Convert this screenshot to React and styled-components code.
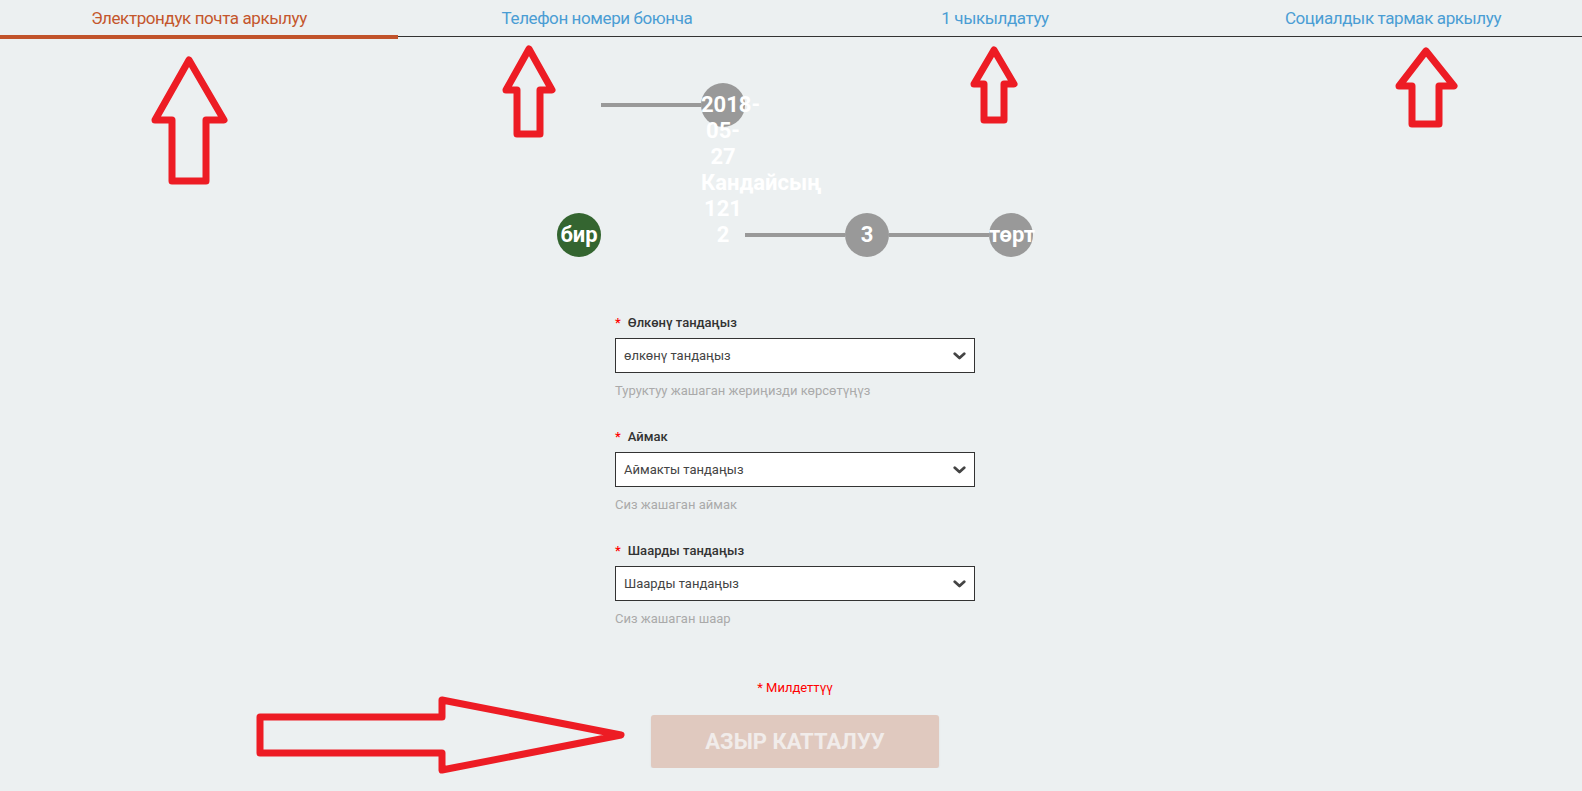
import React from 'react'
import styled, { createGlobalStyle } from 'styled-components'

const GlobalStyle = createGlobalStyle`
  html {
    overflow-x: hidden;
  }
  body {
    margin: 0;
    background: #ecf0f1;
    font-family: Roboto, 'Noto Sans', sans-serif;
  }
`

const TabBar = styled.nav`
  display: flex;
  align-items: flex-start;
`

const Tab = styled.a`
  flex: 0 0 398px;
  display: flex;
  align-items: center;
  justify-content: center;
  height: ${(p) => (p.$active ? '35px' : '36px')};
  margin-bottom: ${(p) => (p.$active ? '-3px' : '0')};
  border-bottom: ${(p) => (p.$active ? '4px solid #c1532b' : '1px solid #333')};
  color: ${(p) => (p.$active ? '#c4562c' : '#4a9dd4')};
  font-size: 17px;
  letter-spacing: -0.4px;
  text-decoration: none;
  cursor: pointer;
`

const Main = styled.main`
  display: flex;
  flex-direction: column;
  align-items: center;
  padding-left: 8px;
`

const StepsRow = styled.div`
  margin-top: 46px;
  font-size: 0;
  line-height: 0;
  white-space: nowrap;
`

const Step = styled.div`
  display: inline-block;
  font-size: 0;
`

const Connector = styled.span`
  display: inline-block;
  vertical-align: top;
  width: 100px;
  height: 4px;
  margin-top: 20px;
  background: #999;
`

const Dot = styled.span`
  display: inline-block;
  vertical-align: baseline;
  box-sizing: border-box;
  width: 44px;
  height: 44px;
  padding-top: 9px;
  border-radius: 50%;
  background: ${(p) => (p.$done ? '#346530' : '#999')};
  color: #fff;
  font: 700 22px/26px Roboto, sans-serif;
  text-align: center;
  white-space: normal;
`

const Form = styled.form`
  width: 360px;
  margin-top: 57px;
`

const Group = styled.div`
  & + & {
    margin-top: 28px;
  }
`

const Label = styled.label`
  display: block;
  margin-bottom: 6px;
  color: #333;
  font-size: 13px;
  font-weight: 500;
  line-height: 18px;
`

const Star = styled.span`
  color: #f00;
  margin-right: 7px;
`

const SelectBox = styled.div`
  box-sizing: border-box;
  display: flex;
  align-items: center;
  justify-content: space-between;
  height: 35px;
  padding: 0 8px;
  background: #fff;
  border: 1px solid #333;
  color: #444;
  font-size: 13px;
  cursor: pointer;
`

const Help = styled.div`
  margin-top: 9px;
  color: #aaa;
  font-size: 13px;
  line-height: 18px;
`

const Required = styled.div`
  margin-top: 51px;
  color: #f00;
  font-size: 13px;
  line-height: 18px;
`

const Submit = styled.button`
  width: 288px;
  height: 53px;
  margin-top: 18px;
  border: none;
  border-radius: 3px;
  background: #e0c9bf;
  box-shadow: 0 1px 2px rgba(0, 0, 0, 0.08);
  color: #f1ecea;
  font: 700 22px Roboto, sans-serif;
  text-transform: uppercase;
`

const Overlay = styled.svg`
  position: absolute;
  top: 0;
  left: 0;
  pointer-events: none;
`

const Chevron = () => (
  <svg width='13' height='8' viewBox='0 0 13 8'>
    <path
      d='M1.8 1.8 L6.5 6 L11.2 1.8'
      fill='none'
      stroke='#444'
      strokeWidth='2.8'
      strokeLinecap='round'
      strokeLinejoin='round'
    />
  </svg>
)

const tabs = [
  'Электрондук почта аркылуу',
  'Телефон номери боюнча',
  '1 чыкылдатуу',
  'Социалдык тармак аркылуу',
]

const fields = [
  ['Өлкөнү тандаңыз', 'өлкөнү тандаңыз', 'Туруктуу жашаган жериңизди көрсөтүңүз'],
  ['Аймак', 'Аймакты тандаңыз', 'Сиз жашаган аймак'],
  ['Шаарды тандаңыз', 'Шаарды тандаңыз', 'Сиз жашаган шаар'],
]

const arrows = [
  '189,60 224,120 206,120 206,181 172,181 172,120 155,120',
  '529,49 552,90 540,90 540,134 517,134 517,90 506,90',
  '994,50 1014,84 1004,84 1004,120 984,120 984,84 974,84',
  '1426,51 1454,86 1439,86 1439,124 1412,124 1412,86 1399,86',
  '260,717 442,717 442,700 621,735 442,770 442,753 260,753',
]

function App() {
  const handleOnSubmit = (e) => {
    e.preventDefault()
  }

  return (
    <>
      <GlobalStyle />
      <TabBar>
        {tabs.map((t, i) => (
          <Tab key={t} $active={i === 0}>
            {t}
          </Tab>
        ))}
      </TabBar>
      <Main>
        <StepsRow>
          <Step>
            <Dot $done>бир</Dot>
          </Step>
          <Step>
            <Connector />
            <Dot>2018-05-27 Кандайсың 121 2</Dot>
          </Step>
          <Step>
            <Connector />
            <Dot>3</Dot>
          </Step>
          <Step>
            <Connector />
            <Dot>төрт</Dot>
          </Step>
        </StepsRow>
        <Form onSubmit={handleOnSubmit}>
          {fields.map(([label, placeholder, help]) => (
            <Group key={label}>
              <Label>
                <Star>*</Star>
                {label}
              </Label>
              <SelectBox>
                <span>{placeholder}</span>
                <Chevron />
              </SelectBox>
              <Help>{help}</Help>
            </Group>
          ))}
        </Form>
        <Required>* Милдеттүү</Required>
        <Submit type='submit'>Азыр катталуу</Submit>
      </Main>
      <Overlay width='1582' height='791'>
        {arrows.map((pts) => (
          <polygon
            key={pts}
            points={pts}
            fill='none'
            stroke='#ed1c24'
            strokeWidth='7'
            strokeLinejoin='round'
          />
        ))}
      </Overlay>
    </>
  )
}

export default App
